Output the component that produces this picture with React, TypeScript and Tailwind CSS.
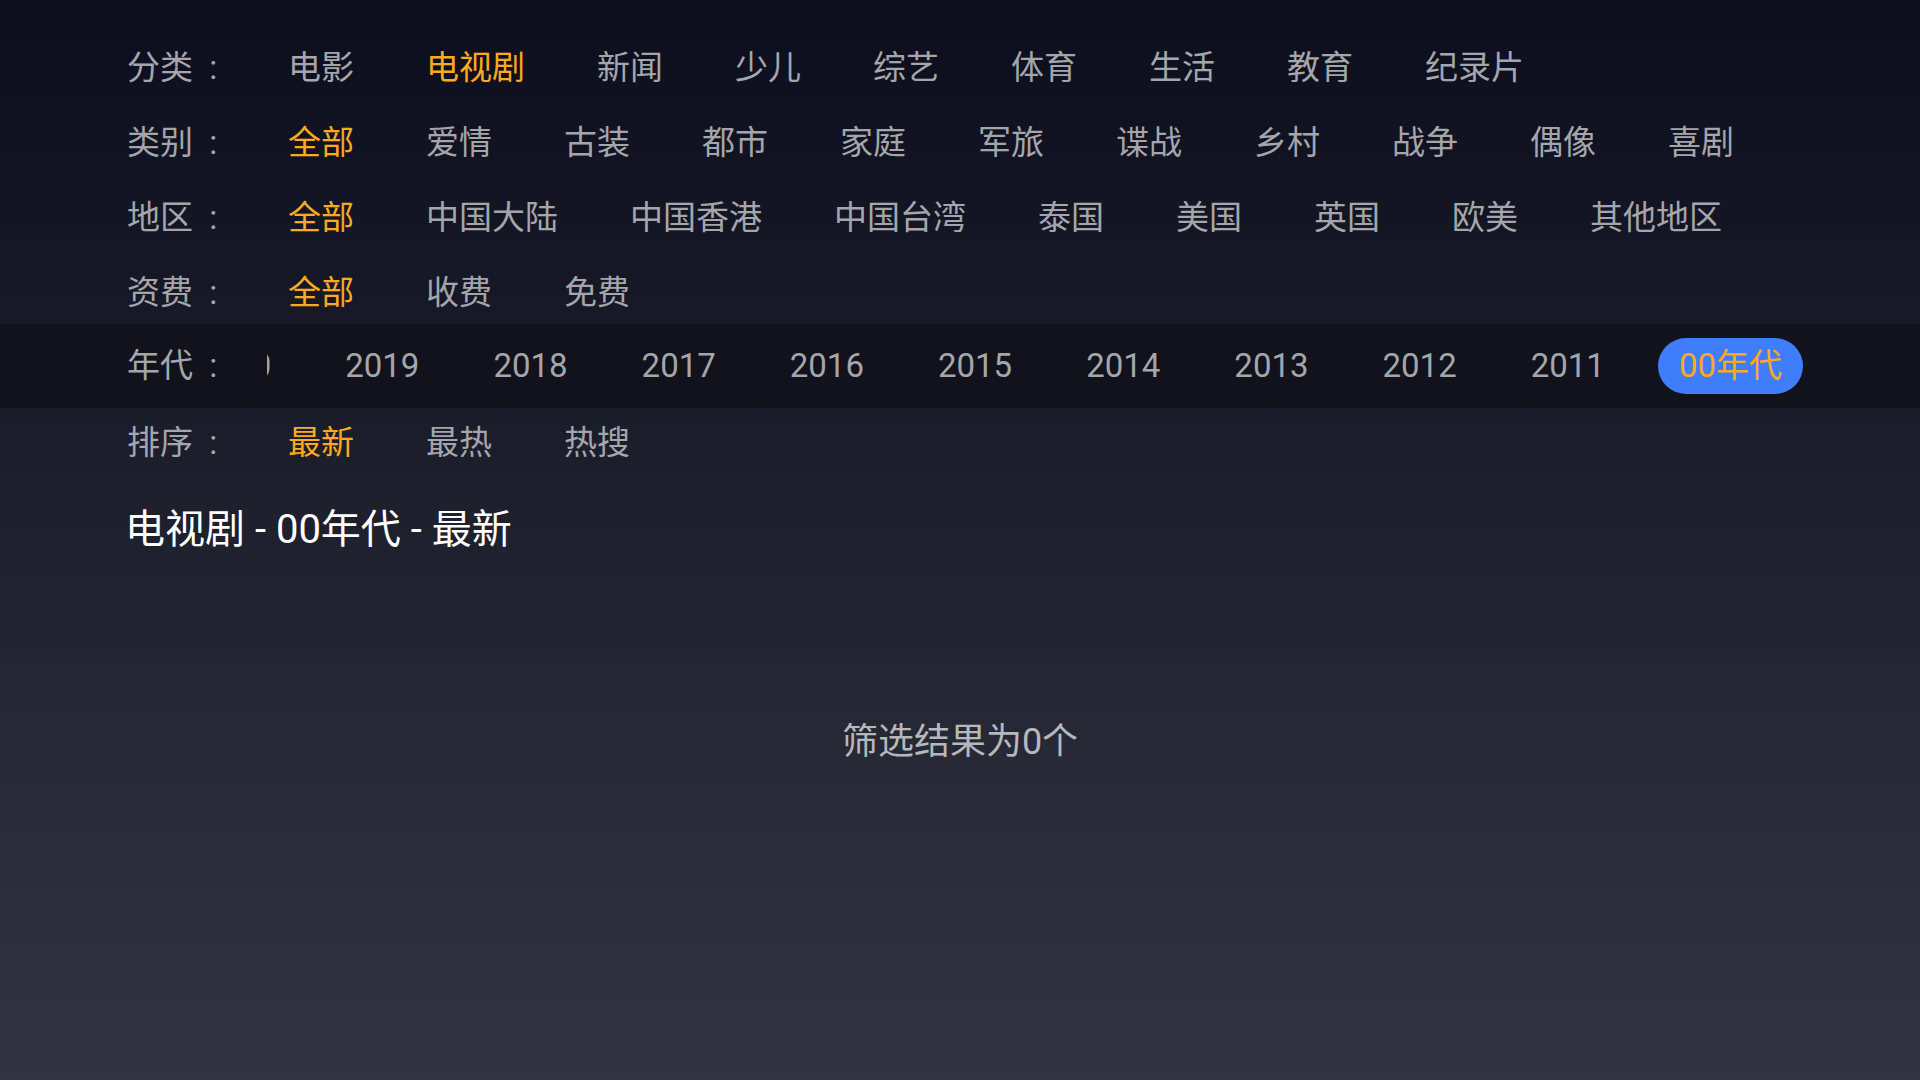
type Row = { label: string; items: string[]; selected: string; focused?: boolean };

const rows: Row[] = [
  { label: '分类', items: ['电影', '电视剧', '新闻', '少儿', '综艺', '体育', '生活', '教育', '纪录片'], selected: '电视剧' },
  { label: '类别', items: ['全部', '爱情', '古装', '都市', '家庭', '军旅', '谍战', '乡村', '战争', '偶像', '喜剧'], selected: '全部' },
  { label: '地区', items: ['全部', '中国大陆', '中国香港', '中国台湾', '泰国', '美国', '英国', '欧美', '其他地区'], selected: '全部' },
  { label: '资费', items: ['全部', '收费', '免费'], selected: '全部' },
  { label: '年代', items: ['2020', '2019', '2018', '2017', '2016', '2015', '2014', '2013', '2012', '2011', '00年代'], selected: '00年代', focused: true },
  { label: '排序', items: ['最新', '最热', '热搜'], selected: '最新' },
];

function FilterRow({ row }: { row: Row }) {
  return (
    <div role="group" aria-label={row.label} className={`flex items-center pl-[127px] pr-[117px] ${row.focused ? 'h-[84px] -mt-[6px] -mb-[3px] bg-[#11121b]' : 'h-[75px]'}`}>
      <span className="w-[140px] shrink-0 whitespace-pre">{row.label}  :</span>
      <div className={`flex min-w-0 flex-1 overflow-hidden ${row.focused ? 'justify-end gap-8' : 'gap-[30px]'}`}>
        {row.items.map((item) => {
          const active = item === row.selected;
          const tone = active ? 'text-[#fba91f]' : '';
          const pill = active && row.focused ? 'bg-[#3f7dfb]' : '';
          return (
            <button key={item} type="button" aria-pressed={active} className={`h-14 shrink-0 rounded-full px-[21px] ${tone} ${pill}`}>
              {item}
            </button>
          );
        })}
      </div>
    </div>
  );
}

export default function App() {
  return (
    <main className="flex min-h-screen flex-col bg-linear-to-b from-[#0d0e1d] to-[#323541] pt-[30px] font-[Roboto,'Noto_Sans_CJK_SC',sans-serif] text-[33px] leading-[48px] text-[#a5a6ab]">
      {rows.map((row) => (
        <FilterRow key={row.label} row={row} />
      ))}
      <h1 className="mt-5 pl-[125px] text-[40px] leading-[60px] text-white">电视剧 - 00年代 - 最新</h1>
      <p className="mt-[155px] text-center text-[36px] leading-[54px] text-[#b7b8bb]">筛选结果为0个</p>
    </main>
  );
}
